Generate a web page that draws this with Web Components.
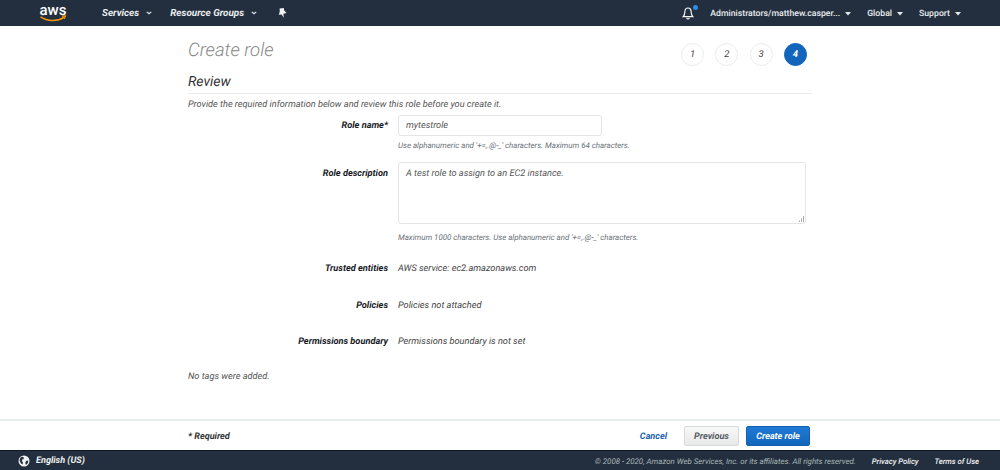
<!DOCTYPE html>
<html lang="en">
<head>
<meta charset="utf-8">
<title>Create role</title>
<style>
  html, body { margin: 0; height: 100%; }
  body { font-family: Roboto, "Liberation Sans", sans-serif; background: #fff; overflow: hidden; text-rendering: geometricPrecision; }
  #app { display: flex; flex-direction: column; height: 470px; }
</style>
</head>
<body>
<div id="app">
  <aws-nav></aws-nav>
  <role-review></role-review>
  <action-bar></action-bar>
  <site-footer></site-footer>
</div>
<script>
/** Top navigation */
const caret = `<svg width="6" height="3.500" viewBox="0 0 7 4"><path d="M0 0h7L3.500 4z" fill="#e6e9ec"/></svg>`;
const chevron = `<svg width="6" height="4" viewBox="0 0 8 5"><path d="M1 1l3 2.600L7 1" fill="none" stroke="#e6e9ec" stroke-width="1.600"/></svg>`;

class AwsNav extends HTMLElement {
    constructor() {
        super();
        this.attachShadow({ mode: "open" });
        this.shadowRoot.innerHTML = `
        <style>
            :host { display: flex; align-items: center; height: 26px; background: #232f3e; color: #eaedf0; font-size: 10px; flex: none; }
            .logo { margin-left: 39px; width: 28px; height: 22px; display: block; overflow: visible; }
            .menu { display: flex; align-items: center; gap: 7px; font-weight: 700; font-style: italic; font-size: 9.900px; }
            .services { margin-left: 35px; }
            .groups { margin-left: 18px; }
            .pin { margin-left: 20px; display: block; }
            .right { margin-left: auto; display: flex; align-items: center; }
            .bell { position: relative; width: 16px; height: 14px; margin-right: 12px; }
            .bell i { position: absolute; top: -1px; right: 0; width: 5px; height: 5px; border-radius: 50%; background: #2f8be6; }
            .item { display: flex; align-items: center; gap: 5px; font-weight: 500; font-size: 8.700px; padding-top: 2px; }
            .user { margin-right: 16px; }
            .global { margin-right: 16px; }
            .support { margin-right: 39px; }
        </style>
        <svg class="logo" viewBox="0 0 28 22">
            <text x="14" y="13" text-anchor="middle" font-family="Roboto, sans-serif" font-size="15" font-weight="500" fill="#fff" textLength="27" lengthAdjust="spacingAndGlyphs">aws</text>
            <path d="M1.500 14.800c7 4.800 17 4.800 23.500.6" fill="none" stroke="#f90" stroke-width="1.500"/>
            <path d="M23 14.200l3.500-.3-1.100 3" fill="none" stroke="#f90" stroke-width="1.200"/>
        </svg>
        <span class="menu services">Services ${chevron}</span>
        <span class="menu groups">Resource Groups ${chevron}</span>
        <svg class="pin" width="10" height="10" viewBox="0 0 10 10"><path d="M2.600.6L6.800 0l.4 2.400L9.600 5 6.400 5.800 6.800 9.800 4.600 6.400 1.800 6.800 2.800 3.400z" fill="#f2f3f3"/></svg>
        <div class="right">
            <div class="bell">
                <svg width="12" height="13" viewBox="0 0 12 13" style="display:block;margin-top:1px"><path d="M6 1C3.900 1 2.900 2.600 2.900 4.600c0 2.700-.6 3.900-1.700 5h9.600c-1.100-1.100-1.700-2.300-1.700-5C9.100 2.600 8.100 1 6 1zM4.700 10.800c.2.800.7 1.200 1.300 1.200s1.100-.4 1.300-1.200" fill="none" stroke="#f2f3f3" stroke-width="1.200"/></svg>
                <i></i>
            </div>
            <span class="item user">Administrators/matthew.casper... ${caret}</span>
            <span class="item global">Global ${caret}</span>
            <span class="item support">Support ${caret}</span>
        </div>`;
    }
}

/** Wizard step circles */
class WizardSteps extends HTMLElement {
    constructor() {
        super();
        this.attachShadow({ mode: "open" });
        const current = Number(this.getAttribute("current"));
        const total = Number(this.getAttribute("total"));
        let steps = "";
        for (let i = 1; i <= total; i++) {
            steps += `<span class="step ${i === current ? "on" : ""}">${i}</span>`;
        }
        this.shadowRoot.innerHTML = `
        <style>
            :host { display: flex; gap: 11.300px; }
            .step { box-sizing: border-box; width: 23px; height: 23px; border-radius: 50%; border: 1px solid #eaeded; display: flex; align-items: center; justify-content: center; font-size: 9.500px; font-style: italic; color: #444; }
            .on { background: #1166bb; border-color: #1166bb; color: #fff; font-weight: 700; }
        </style>${steps}`;
    }
}

/** One label and value row of the form */
class FormRow extends HTMLElement {
    constructor() {
        super();
        this.attachShadow({ mode: "open" });
        this.shadowRoot.innerHTML = `
        <style>
            :host { display: grid; grid-template-columns: 200px 1fr; column-gap: 10px; font-size: 9.200px; font-style: italic; color: #444; line-height: 14px; }
            .label { text-align: right; font-weight: 700; color: #16191f; }
        </style>
        <div class="label"><slot name="label"></slot></div>
        <div class="value"><slot></slot></div>`;
    }
}

/** Text box showing a value, with optional resize grip and hint */
class ReadBox extends HTMLElement {
    constructor() {
        super();
        this.attachShadow({ mode: "open" });
        this.shadowRoot.innerHTML = `
        <style>
            :host { display: block; }
            .box { position: relative; box-sizing: border-box; width: var(--box-w, 204px); height: var(--box-h, 21px); border: 1px solid #e3e5e7; border-radius: 3px; padding: var(--box-pad, 4px 7px); font-size: 9.200px; line-height: 12px; font-style: italic; color: #555; }
            .grip { position: absolute; right: 1px; bottom: 1px; display: var(--grip, none); }
            .hint { margin-top: var(--hint-gap, 4px); font-size: 7.900px; line-height: 12px; color: #687078; font-style: italic; }
        </style>
        <div class="box"><slot></slot>
            <svg class="grip" width="6" height="6" viewBox="0 0 6 6"><path d="M5.500 0v6M3.500 2.500V6M1.500 4.500V6" stroke="#aaa" stroke-width="1"/></svg>
        </div>
        <div class="hint"><slot name="hint"></slot></div>`;
    }
}

/** Review step body */
class RoleReview extends HTMLElement {
    constructor() {
        super();
        this.attachShadow({ mode: "open" });
        this.shadowRoot.innerHTML = `
        <style>
            :host { display: block; flex: 1; box-sizing: border-box; width: 624px; margin-left: 188px; padding-top: 14px; font-style: italic; }
            .head { display: flex; justify-content: space-between; align-items: flex-start; height: 30px; }
            h1 { margin: 0; font-size: 18.600px; line-height: 21px; font-weight: 300; color: #888; }
            wizard-steps { margin: 3px 5px 0 0; }
            h2 { margin: 3px 0 0; font-size: 14px; line-height: 18px; font-weight: 400; color: #333; padding-bottom: 2px; border-bottom: 1px solid #eaeded; height: 18px; }
            .intro { margin: 4px 0 4px; font-size: 9.200px; line-height: 13px; color: #555; }
            .name { margin-bottom: 10px; }
            .desc { margin-bottom: 18px; --box-w: 408px; --box-h: 62px; --box-pad: 5px 7px; --grip: block; --hint-gap: 8px; }
            .plain { margin-bottom: 22.500px; }
            .tags { margin: 21.500px 0 0; font-size: 9.200px; line-height: 12px; color: #555; }
            .label-pad { display: inline-block; padding-top: 4px; }
            .desc .label-pad { padding-top: 5px; }
        </style>
        <div class="head">
            <h1>Create role</h1>
            <wizard-steps current="4" total="4"></wizard-steps>
        </div>
        <h2>Review</h2>
        <p class="intro">Provide the required information below and review this role before you create it.</p>
        <form-row class="name">
            <span slot="label" class="label-pad">Role name*</span>
            <read-box>mytestrole<span slot="hint">Use alphanumeric and '+=,.@-_' characters. Maximum 64 characters.</span></read-box>
        </form-row>
        <form-row class="desc">
            <span slot="label" class="label-pad">Role description</span>
            <read-box>A test role to assign to an EC2 instance.<span slot="hint">Maximum 1000 characters. Use alphanumeric and '+=,.@-_' characters.</span></read-box>
        </form-row>
        <form-row class="plain"><span slot="label">Trusted entities</span>AWS service: ec2.amazonaws.com</form-row>
        <form-row class="plain"><span slot="label">Policies</span>Policies not attached</form-row>
        <form-row><span slot="label">Permissions boundary</span>Permissions boundary is not set</form-row>
        <p class="tags">No tags were added.</p>`;
    }
}

/** Bottom bar with the wizard buttons */
class ActionBar extends HTMLElement {
    constructor() {
        super();
        this.attachShadow({ mode: "open" });
        this.shadowRoot.innerHTML = `
        <style>
            :host { display: flex; align-items: center; flex: none; height: 29px; border-top: 2px solid #eaeded; padding: 0 190px 0 188px; font-size: 9.100px; font-style: italic; font-weight: 700; }
            .req { color: #333; margin-right: auto; padding-top: 2px; }
            .cancel { color: #1a5fb0; margin-right: 17px; padding-top: 2px; }
            button { font: inherit; height: 20px; border-radius: 2px; padding: 2px 0 0; cursor: pointer; text-rendering: inherit; }
            .prev { width: 55px; margin-right: 7px; background: linear-gradient(#f8f8f8, #e8e8e8); border: 1px solid #d5dbdb; color: #545b64; }
            .create { width: 64px; background: linear-gradient(#1f7ad6, #1166bb); border: 1px solid #1560ab; color: #fff; }
        </style>
        <span class="req">* Required</span>
        <span class="cancel">Cancel</span>
        <button class="prev">Previous</button>
        <button class="create">Create role</button>`;
    }
}

/** Page footer */
class SiteFooter extends HTMLElement {
    constructor() {
        super();
        this.attachShadow({ mode: "open" });
        this.shadowRoot.innerHTML = `
        <style>
            :host { display: flex; align-items: center; flex: none; height: 19px; background: #232f3e; border-top: 1px solid #11181f; color: #d5dbdb; font-size: 7.900px; font-style: italic; }
            svg { margin-left: 18px; display: block; }
            .lang { margin-left: 6px; font-size: 9.100px; font-weight: 700; color: #f2f3f3; padding-top: 1px; }
            .copy { margin-left: auto; color: #aab7b8; padding-top: 1px; }
            a { color: #f2f3f3; font-weight: 500; margin-left: 16px; font-size: 7.700px; padding-top: 1px; }
            .last { margin-right: 21px; }
        </style>
        <svg width="12" height="12" viewBox="0 0 12 12">
            <circle cx="6" cy="6" r="5.500" fill="#f2f3f3"/>
            <path d="M2.500 2.500l2-.8 1.500 1-.6 1.500-1.600.6.400 1.700L5 7.500 4.500 9.500 3 8.500 1.500 5.500zM8 6l2.200-.5-.3 2.500L8 10 7.300 8z" fill="#232f3e"/>
        </svg>
        <span class="lang">English (US)</span>
        <span class="copy">© 2008 - 2020, Amazon Web Services, Inc. or its affiliates. All rights reserved.</span>
        <a>Privacy Policy</a>
        <a class="last">Terms of Use</a>`;
    }
}

customElements.define("aws-nav", AwsNav);
customElements.define("wizard-steps", WizardSteps);
customElements.define("form-row", FormRow);
customElements.define("read-box", ReadBox);
customElements.define("role-review", RoleReview);
customElements.define("action-bar", ActionBar);
customElements.define("site-footer", SiteFooter);
</script>
</body>
</html>
